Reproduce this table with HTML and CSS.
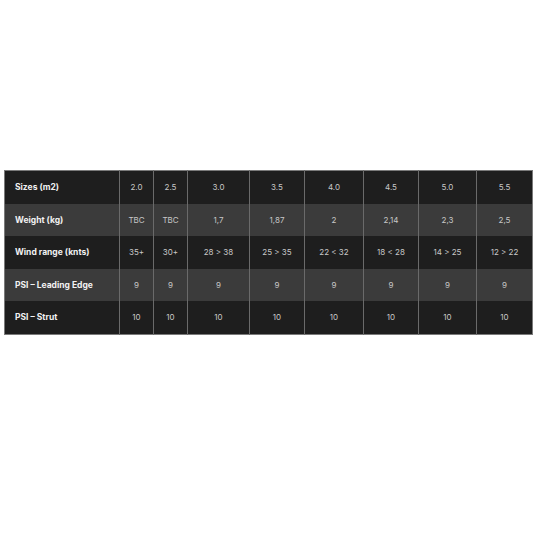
FILE: index.html
```html
<!DOCTYPE html>
<html>
<head>
<meta charset="utf-8">
<link rel="stylesheet" href="styles.css">
</head>
<body>
<div class="wrap">
<table class="specs">
<colgroup>
<col class="c0"><col class="c1"><col class="c2"><col class="c3"><col class="c4"><col class="c5"><col class="c6"><col class="c7"><col class="c8">
</colgroup>
<tr class="dark"><th>Sizes (m2)</th><td>2.0</td><td>2.5</td><td>3.0</td><td>3.5</td><td>4.0</td><td>4.5</td><td>5.0</td><td>5.5</td></tr>
<tr class="light"><th>Weight (kg)</th><td>TBC</td><td>TBC</td><td>1,7</td><td>1,87</td><td>2</td><td>2,14</td><td>2,3</td><td>2,5</td></tr>
<tr class="dark"><th>Wind range (knts)</th><td>35+</td><td>30+</td><td>28 &gt; 38</td><td>25 &gt; 35</td><td>22 &lt; 32</td><td>18 &lt; 28</td><td>14 &gt; 25</td><td>12 &gt; 22</td></tr>
<tr class="light"><th>PSI – Leading Edge</th><td>9</td><td>9</td><td>9</td><td>9</td><td>9</td><td>9</td><td>9</td><td>9</td></tr>
<tr class="dark"><th>PSI – Strut</th><td>10</td><td>10</td><td>10</td><td>10</td><td>10</td><td>10</td><td>10</td><td>10</td></tr>
</table>
</div>
</body>
</html>
```

FILE: styles.css
```css
html, body {
  margin: 0;
  padding: 0;
  background: #ffffff;
}
.wrap {
  padding: 170px 3px 0 4px;
}
.specs {
  border-collapse: collapse;
  table-layout: fixed;
  width: 528px;
  border: 1px solid #7a7a7a;
  font-family: "Inter", "Open Sans", sans-serif;
  font-size: 8px;
}
.c0 { width: 115px; }
.c1 { width: 34px; }
.c2 { width: 34px; }
.c3 { width: 62px; }
.c4 { width: 55px; }
.c5 { width: 59px; }
.c6 { width: 55px; }
.c7 { width: 58px; }
.c8 { width: 56px; }
.specs th, .specs td {
  height: 32.5px;
  padding: 0;
  border-left: 1px solid #6a6a6a;
  text-align: center;
  color: #c8c8c8;
  font-weight: 400;
}
.specs th {
  text-align: left;
  padding-left: 10px;
  color: #f2f2f2;
  font-size: 8.5px;
  font-weight: 700;
  border-left: none;
}
.dark th, .dark td { background: #1e1e1e; }
.light th, .light td { background: #3b3b3b; }
```
